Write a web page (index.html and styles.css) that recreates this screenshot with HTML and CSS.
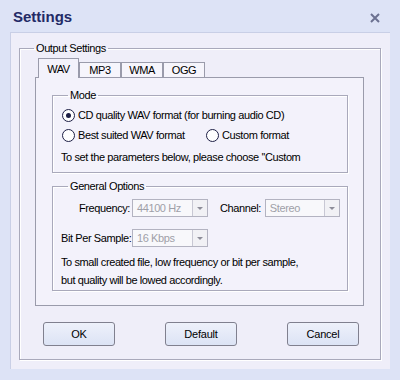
FILE: index.html
```html
<!DOCTYPE html>
<html lang="en">
<head>
    <meta charset="UTF-8">
    <title>Settings</title>
    <link rel="stylesheet" href="styles.css">
</head>
<body>
    <div class="window">
        <div class="titlebar">
            <span class="title">Settings</span>
            <svg class="close" width="10" height="10" viewBox="0 0 10 10">
                <path d="M1 1 L9 9 M9 1 L1 9" stroke="#6c7191" stroke-width="2" fill="none"/>
            </svg>
        </div>

        <div class="panel">
            <fieldset class="group outer">
                <legend>Output Settings</legend>

                <div class="tabs">
                    <div class="tab active">WAV</div>
                    <div class="tab">MP3</div>
                    <div class="tab">WMA</div>
                    <div class="tab">OGG</div>
                </div>

                <div class="tab-page">
                    <fieldset class="group mode">
                        <legend>Mode</legend>
                        <div class="radio-row">
                            <span class="radio checked"></span>
                            <span>CD quality WAV format (for burning audio CD)</span>
                        </div>
                        <div class="radio-row">
                            <span class="radio-cell"><span class="radio"></span><span>Best suited WAV format</span></span>
                            <span class="radio"></span>
                            <span>Custom format</span>
                        </div>
                        <p class="note">To set the parameters below, please choose ''Custom</p>
                    </fieldset>

                    <fieldset class="group general">
                        <legend>General Options</legend>
                        <div class="opt-row">
                            <span class="opt-label">Frequency:</span>
                            <div class="combo"><span class="combo-text">44100 Hz</span><span class="combo-btn"></span></div>
                            <span class="opt-label channel">Channel:</span>
                            <div class="combo wide"><span class="combo-text">Stereo</span><span class="combo-btn"></span></div>
                        </div>
                        <div class="opt-row second">
                            <span class="opt-label">Bit Per Sample:</span>
                            <div class="combo"><span class="combo-text">16 Kbps</span><span class="combo-btn"></span></div>
                        </div>
                        <p class="info">To small created file, low frequency or bit per sample,<br>but quality will be lowed accordingly.</p>
                    </fieldset>
                </div>

                <div class="buttons">
                    <button class="btn">OK</button>
                    <button class="btn">Default</button>
                    <button class="btn">Cancel</button>
                </div>
            </fieldset>
        </div>
    </div>
</body>
</html>
```

FILE: styles.css
```css
body { margin: 0; font-family: "Liberation Sans", Arial, sans-serif; font-size: 11px; letter-spacing: -0.4px; color: #000; }
.window { width: 400px; height: 380px; background: #dde3f6; overflow: hidden; }

/* title bar */
.titlebar { height: 32px; display: flex; align-items: center; justify-content: space-between; padding: 0 20px 0 13px; box-sizing: border-box; }
.title { font-size: 15px; font-weight: bold; color: #232a66; letter-spacing: 0; padding-top: 1px; }
.close { display: block; margin-top: 4px; }

.panel { margin: 0 10px; height: 337px; background: #efeef9; border-left: 1px solid #c9cfe6; border-top: 1px solid #c9cfe6; padding: 8px 9px 0 8px; box-sizing: border-box; }

/* group boxes */
.group { margin: 0; padding: 0; border: 1px solid #a9a9bb; box-shadow: inset 1px 1px 0 #fff, 1px 1px 0 #fff; min-width: 0; }
.group legend { padding: 0 2px; line-height: 14px; }
.outer legend { margin-left: 14px; }

/* tabs */
.tabs { display: flex; align-items: flex-end; height: 21px; margin: 2px 16px 0 18px; }
.tab { width: 40px; height: 14px; line-height: 14px; text-align: center; border: 1px solid #9a9bab; border-bottom: none; background: #f6f5fc; margin-bottom: 1px; }
.tab.active { width: 39px; height: 19px; line-height: 20px; background: #f3f2fb; margin-bottom: 0; }
.tab-page { margin: -1px 16px 0 15px; border: 1px solid #9a9bab; background: #f3f2fb; padding: 10px 15px 14px 16px; }

/* mode */
.mode { padding: 3px 8px 8px 8px; }
.mode legend, .general legend { margin-left: 7px; }
.radio-row { display: flex; align-items: center; height: 20px; }
.radio { width: 11px; height: 11px; border: 1px solid #1d1f45; border-radius: 50%; background: #fff; margin: 0 3px 0 1px; display: flex; align-items: center; justify-content: center; flex: none; }
.radio.checked::after { content: ""; width: 5px; height: 5px; border-radius: 50%; background: #1d1f45; }
.radio-cell { display: flex; align-items: center; width: 144px; }
.note { margin: 5px 0 0; line-height: 14px; }

/* general options */
.general { margin-top: 6px; padding: 0 8px 1px 8px; }
.opt-row { display: flex; align-items: center; margin-top: 6px; }
.opt-row.second { margin-top: 12px; }
.opt-label { width: 69px; text-align: right; margin-right: 2px; white-space: nowrap; flex: none; }
.opt-label.channel { width: auto; margin: 0 4px 0 12px; }
.combo { display: flex; width: 76px; height: 18px; box-sizing: border-box; border: 1px solid #b3b3c1; background: #f8f8fb; color: #9fa0a8; flex: none; }
.combo.wide { width: 75px; }
.combo-text { flex: 1; padding-left: 4px; line-height: 16px; }
.combo-btn { width: 14px; border-left: 1px solid #c8c8d4; background: #f1f1f5; display: flex; align-items: center; justify-content: center; }
.combo-btn::after { content: ""; border-left: 3px solid transparent; border-right: 3px solid transparent; border-top: 3px solid #8d8d99; }
.info { margin: 6px 0 0; line-height: 18px; }

/* buttons */
.buttons { display: flex; justify-content: space-between; padding: 16px 21px 13px 23px; }
.btn { width: 72px; height: 24px; font-family: inherit; font-size: 11px; letter-spacing: -0.2px; color: #000; border: 1px solid #80808f; border-radius: 3px; background: linear-gradient(#eef1fb, #dce3f5); padding: 0; }
```
